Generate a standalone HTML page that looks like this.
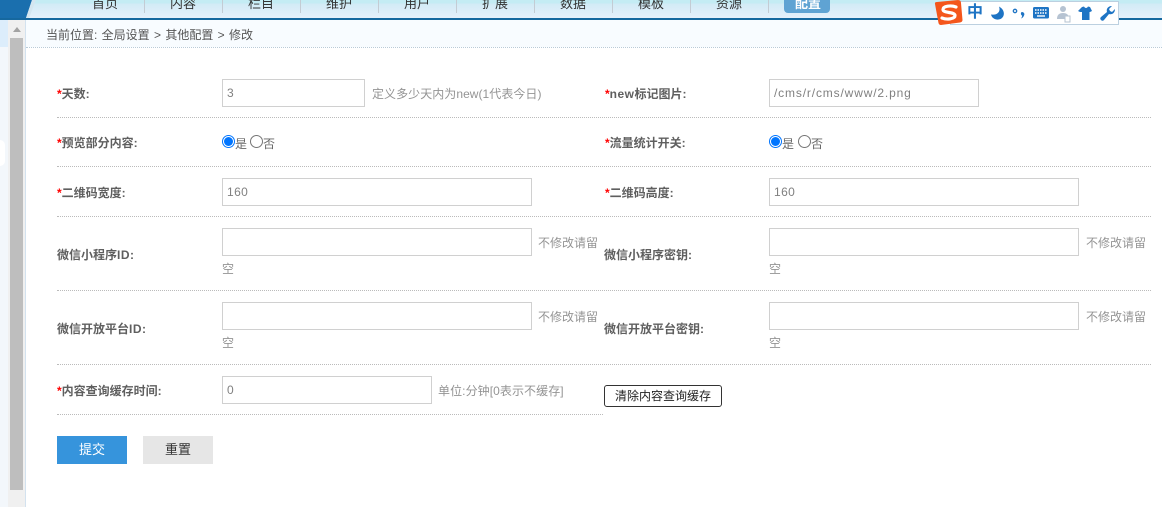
<!DOCTYPE html>
<html><head><meta charset="utf-8">
<style>
html,body{margin:0;padding:0;width:1162px;height:507px;overflow:hidden;background:#fff}
body{position:relative;font-family:"Liberation Sans","Noto Sans CJK SC",sans-serif;font-size:12px;color:#666}
.a{position:absolute}
.t{position:absolute;white-space:nowrap;line-height:16px;height:16px;margin-top:1px}
.nav{position:absolute;top:-4px;width:78px;text-align:center;font-size:13px;line-height:16px;color:#333}
.sep{position:absolute;top:0;width:1px;height:13px;background:#c3ccd4}
.l{position:absolute;white-space:nowrap;font-weight:bold;font-size:12px;line-height:16px;color:#5f5f5f;margin-top:1px}
.l i{color:#f00;font-style:normal}
.l b{letter-spacing:.5px}
.i{position:absolute;box-sizing:border-box;border:1px solid #d0d0d0;height:28px;line-height:27px;padding-left:4px;font-size:12px;color:#808080;background:#fff;letter-spacing:.4px}
.h{position:absolute;white-space:nowrap;color:#949494;font-size:12px;line-height:16px;margin-top:1px}
.d{position:absolute;height:0;border-top:1px dotted #bbb}
.r{position:absolute;box-sizing:border-box;width:13px;height:13px;border-radius:50%;border:1px solid #767676;background:#fff}
.r.on{border:1px solid #0075ff;}
.r.on:after{content:"";position:absolute;left:1px;top:1px;width:9px;height:9px;border-radius:50%;background:#0075ff}
</style></head><body>
<div class="a" style="left:0;top:0;width:1162px;height:18px;background:linear-gradient(#c4ecf4 0,#c4ecf4 3px,#d2ebf6 4px,#e6f0fb 18px)"></div>
<div class="a" style="left:0;top:18px;width:1162px;height:2px;background:#16689f"></div>
<svg class="a" style="left:0;top:0" width="40" height="20"><polygon points="0,0 32,0 26,18 0,18" fill="#1a6fae"/><polygon points="32,0 36,0 29,18 26,18" fill="#d4e6f0"/></svg>

<div class="nav" style="left:66px">首页</div><div class="sep" style="left:144px"></div>
<div class="nav" style="left:144px">内容</div><div class="sep" style="left:222px"></div>
<div class="nav" style="left:222px">栏目</div><div class="sep" style="left:300px"></div>
<div class="nav" style="left:300px">维护</div><div class="sep" style="left:378px"></div>
<div class="nav" style="left:378px">用户</div><div class="sep" style="left:456px"></div>
<div class="nav" style="left:456px">扩展</div><div class="sep" style="left:534px"></div>
<div class="nav" style="left:534px">数据</div><div class="sep" style="left:612px"></div>
<div class="nav" style="left:612px">模板</div><div class="sep" style="left:690px"></div>
<div class="nav" style="left:690px">资源</div><div class="sep" style="left:768px"></div>
<div class="a" style="left:784px;top:0;width:46px;height:13px;background:#5fa3d3;border-radius:0 0 4px 4px"></div>
<div class="nav" style="left:769px;color:#fff;font-weight:bold">配置</div>

<div class="a" style="left:0;top:20px;width:25px;height:27px;background:#dcedfb"></div>
<div class="a" style="left:0;top:47px;width:25px;height:460px;background:#f3f7fb"></div>
<div class="a" style="left:0;top:140px;width:5px;height:26px;background:#fff;border-radius:0 6px 6px 0"></div>
<div class="a" style="left:8px;top:20px;width:17px;height:487px;background:#f0f0f0"></div>
<div class="a" style="left:10px;top:38px;width:13px;height:452px;background:#bebebe"></div>
<svg class="a" style="left:10px;top:26px" width="14" height="8"><polygon points="3,6 7,1 11,6" fill="#a3a3a3"/></svg>
<div class="a" style="left:25px;top:20px;width:1px;height:487px;background:#d3e2ef"></div>

<div class="a" style="left:26px;top:20px;width:1136px;height:27px;background:#f8fcff"></div>
<div class="d" style="left:26px;top:47px;width:1136px;border-top-color:#b9cbd8"></div>
<div class="t" style="left:46px;top:26px;color:#555;word-spacing:1px">当前位置: 全局设置 &gt; 其他配置 &gt; 修改</div>

<div class="l" style="left:57px;top:85px"><i>*</i>天数:</div>
<div class="i" style="left:222px;top:79px;width:143px">3</div>
<div class="h" style="left:372px;top:85px;letter-spacing:.05px">定义多少天内为new(1代表今日)</div>
<div class="l" style="left:605px;top:85px"><i>*</i><b>new</b>标记图片:</div>
<div class="i" style="left:769px;top:79px;width:210px;letter-spacing:.85px">/cms/r/cms/www/2.png</div>
<div class="d" style="left:57px;top:117px;width:1094px"></div>

<div class="l" style="left:57px;top:134px"><i>*</i>预览部分内容:</div>
<div class="r on" style="left:222px;top:135px"></div><div class="t" style="left:235px;top:135px">是</div>
<div class="r" style="left:250px;top:135px"></div><div class="t" style="left:263px;top:135px">否</div>
<div class="l" style="left:605px;top:134px"><i>*</i>流量统计开关:</div>
<div class="r on" style="left:769px;top:135px"></div><div class="t" style="left:782px;top:135px">是</div>
<div class="r" style="left:798px;top:135px"></div><div class="t" style="left:811px;top:135px">否</div>
<div class="d" style="left:57px;top:166px;width:1094px"></div>

<div class="l" style="left:57px;top:184px"><i>*</i>二维码宽度:</div>
<div class="i" style="left:222px;top:178px;width:310px">160</div>
<div class="l" style="left:605px;top:184px"><i>*</i>二维码高度:</div>
<div class="i" style="left:769px;top:178px;width:310px">160</div>
<div class="d" style="left:57px;top:216px;width:1094px"></div>

<div class="l" style="left:57px;top:246px">微信小程序<b>ID</b>:</div>
<div class="i" style="left:222px;top:228px;width:310px"></div>
<div class="h" style="left:538px;top:234px">不修改请留</div>
<div class="h" style="left:222px;top:260px">空</div>
<div class="l" style="left:604px;top:246px">微信小程序密钥:</div>
<div class="i" style="left:769px;top:228px;width:310px"></div>
<div class="h" style="left:1086px;top:234px">不修改请留</div>
<div class="h" style="left:769px;top:260px">空</div>
<div class="d" style="left:57px;top:290px;width:1094px"></div>

<div class="l" style="left:57px;top:320px">微信开放平台<b>ID</b>:</div>
<div class="i" style="left:222px;top:302px;width:310px"></div>
<div class="h" style="left:538px;top:308px">不修改请留</div>
<div class="h" style="left:222px;top:334px">空</div>
<div class="l" style="left:604px;top:320px">微信开放平台密钥:</div>
<div class="i" style="left:769px;top:302px;width:310px"></div>
<div class="h" style="left:1086px;top:308px">不修改请留</div>
<div class="h" style="left:769px;top:334px">空</div>
<div class="d" style="left:57px;top:364px;width:1094px"></div>

<div class="l" style="left:57px;top:382px"><i>*</i>内容查询缓存时间:</div>
<div class="i" style="left:222px;top:376px;width:210px">0</div>
<div class="h" style="left:438px;top:382px;letter-spacing:.08px">单位:分钟[0表示不缓存]</div>
<div class="a" style="left:604px;top:385px;width:118px;height:22px;box-sizing:border-box;border:1px solid #333;border-radius:3px;background:#fff;color:#222;font-size:12px;line-height:20px;text-align:center">清除内容查询缓存</div>
<div class="d" style="left:57px;top:414px;width:546px"></div>

<div class="a" style="left:57px;top:436px;width:70px;height:28px;background:#3694dc;color:#fff;text-align:center;line-height:27px;font-size:13px">提交</div>
<div class="a" style="left:143px;top:436px;width:70px;height:28px;background:#e6e6e6;color:#333;text-align:center;line-height:27px;font-size:13px">重置</div>

<div class="a" style="left:950px;top:1px;width:169px;height:24px;box-sizing:border-box;background:#fff;border:1px solid #bcd0e0"></div>
<svg class="a" style="left:934px;top:0" width="29" height="26">
<path d="M1 4 Q0.500 2 3 2 L24 0 Q27 0 27 3 L28.500 20 Q28.500 22 26 22.500 L7 25 Q5 25 4.500 23Z" fill="#f4561c"/>
<path d="M22 7 C17 5 9 6 9 9.500 C9 13.500 21 11.500 21 15.500 C21 19 13 20 8 18" fill="none" stroke="#fff" stroke-width="3.200" stroke-linecap="round"/>
</svg>
<div class="a" style="left:967px;top:4px;font-size:16px;line-height:18px;font-weight:bold;color:#1e74c4">中</div>
<svg class="a" style="left:990px;top:5px" width="130" height="18">
<path d="M9 1.500 C11 7 7 10.500 1 9.500 C2 14 7 15.500 10.500 14 C15 12 15.500 5 9 1.500Z" fill="#1e74c4"/>
<circle cx="25" cy="6" r="1.700" fill="none" stroke="#1e74c4" stroke-width="1.300"/>
<path d="M32 7 C34 7 35 9 34 10.500 C33.500 12 32.500 13 31 13.500 C32 12 32.300 11 32 10.500 C30.500 10 30.500 7 32 7Z" fill="#1e74c4"/>
<rect x="43" y="2" width="16" height="11.500" rx="1.500" fill="#1e74c4"/>
<path d="M45 5h12M45 8h12" stroke="#fff" stroke-width="1.400" stroke-dasharray="1.500 1"/><path d="M47 11h8" stroke="#fff" stroke-width="1.400"/>
<circle cx="73" cy="4" r="3" fill="#b6c3d2"/><path d="M67 14 C67 10 69 8 73 8 C77 8 79 10 79 14Z" fill="#b6c3d2"/><rect x="75" y="11" width="5" height="6" fill="#fff" stroke="#b6c3d2"/>
<path d="M92 2 L94 1.500 C95 3.500 97 3.500 98 1.500 L100 2 L102 6 L100 7 L99.500 7 L99.500 15 L92 15 L92 7 L90 7 L88 6Z" fill="#1e74c4"/>
<path d="M111 15 C110 14 110 13 111 12 L117 7 C116 4 118 1 122 1 L119 4 L120 6 L122 7 L125 4 C125 8 122 10 119 9 L114 15 C113 16 112 16 111 15Z" fill="#1e74c4"/>
</svg>
</body></html>
